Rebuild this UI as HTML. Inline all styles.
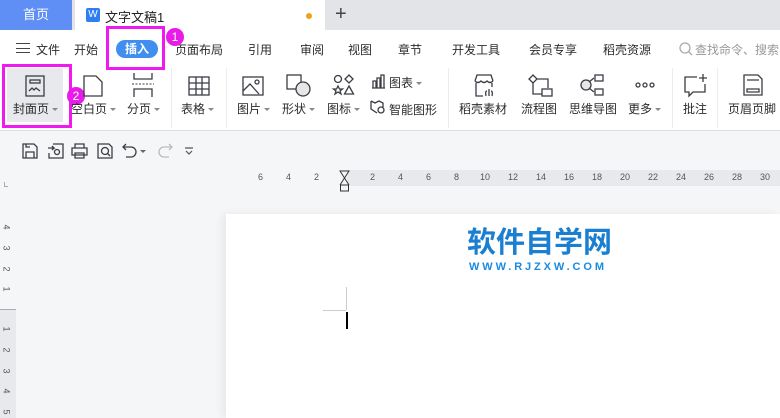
<!DOCTYPE html>
<html><head><meta charset="utf-8"><style>
*{margin:0;padding:0;box-sizing:border-box}
body{width:780px;height:418px;overflow:hidden;position:relative;background:#f5f6f8;font-family:"Liberation Sans","Noto Sans CJK SC",sans-serif;color:#2b2b2b;font-size:12px}
.a{position:absolute;white-space:nowrap}
.lbl{font-size:12px;line-height:14px}
svg{position:absolute;overflow:visible}
.ic{fill:none;stroke:#3a3d44;stroke-width:1.3}
.car{display:inline-block;width:0;height:0;border-left:3px solid transparent;border-right:3px solid transparent;border-top:3px solid #888;vertical-align:middle;margin-left:3px}
.num{font-size:9px;color:#555}
</style></head><body>
<div class="a" style="left:0;top:0;width:780px;height:30px;background:#e3e4e8"></div>
<div class="a" style="left:0;top:0;width:72px;height:30px;background:#5f8ef5;color:#fff;font-size:13px;line-height:30px;text-align:center">首页</div>
<div class="a" style="left:75px;top:0;width:250px;height:30px;background:#fff"></div>
<div class="a" style="left:86px;top:8px;width:14px;height:14px;background:#2f7ef0;border-radius:2px;color:#fff;font-size:10px;line-height:14px;text-align:center">W</div>
<div class="a" style="left:105px;top:7px;font-size:13px;color:#222">文字文稿1</div>
<div class="a" style="left:306px;top:13px;width:6px;height:6px;border-radius:50%;background:#f0a020"></div>
<div class="a" style="left:335px;top:3px;font-size:20px;color:#444;line-height:22px">+</div>
<div class="a" style="left:0;top:30px;width:780px;height:101px;background:#fff;border-bottom:1px solid #dcdde0"></div>
<div class="a" style="left:16px;top:43px;width:14px;height:10px;border-top:1.3px solid #444;border-bottom:1.3px solid #444"></div>
<div class="a" style="left:16px;top:47.5px;width:14px;height:1.3px;background:#444"></div>
<div class="a" style="left:36px;top:41px;font-size:12px">文件</div>
<div class="a" style="left:74px;top:41px">开始</div>
<div class="a" style="left:116px;top:40px;width:42px;height:18px;border-radius:9px;background:#3f8ef0;color:#fff;font-weight:bold;line-height:18px;text-align:center">插入</div>
<div class="a" style="left:175px;top:41px">页面布局</div>
<div class="a" style="left:248px;top:41px">引用</div>
<div class="a" style="left:300px;top:41px">审阅</div>
<div class="a" style="left:348px;top:41px">视图</div>
<div class="a" style="left:398px;top:41px">章节</div>
<div class="a" style="left:452px;top:41px">开发工具</div>
<div class="a" style="left:529px;top:41px">会员专享</div>
<div class="a" style="left:603px;top:41px">稻壳资源</div>
<svg style="left:679px;top:42px" width="14" height="14"><circle cx="6" cy="6" r="5" fill="none" stroke="#aaa" stroke-width="1.3"/><path d="M9.5 9.5 L13 13" stroke="#aaa" stroke-width="1.3"/></svg>
<div class="a" style="left:695px;top:41px;color:#999">查找命令、搜索</div>
<div class="a" style="left:7px;top:68px;width:56px;height:54px;background:#e8e9ec"></div>
<div class="a" style="left:106px;top:26px;width:59px;height:44px;border:3px solid #f01af0"></div>
<div class="a" style="left:166px;top:28px;width:18px;height:18px;border-radius:50%;background:#e81ce8;color:#fff;font-size:12px;line-height:18px;text-align:center">1</div>
<div class="a" style="left:2px;top:64px;width:70px;height:64px;border:3px solid #f01af0"></div>
<div class="a" style="left:67px;top:87px;width:18px;height:18px;border-radius:50%;background:#e81ce8;color:#fff;font-size:12px;line-height:18px;text-align:center">2</div>
<div class="a" style="left:171px;top:68px;width:1px;height:60px;background:#ececee"></div>
<div class="a" style="left:226px;top:68px;width:1px;height:60px;background:#ececee"></div>
<div class="a" style="left:448px;top:68px;width:1px;height:60px;background:#ececee"></div>
<div class="a" style="left:672px;top:68px;width:1px;height:60px;background:#ececee"></div>
<div class="a" style="left:717px;top:68px;width:1px;height:60px;background:#ececee"></div>
<svg style="left:25px;top:75px" width="20" height="22"><rect class="ic" x="1" y="1" width="18" height="20"/><rect class="ic" x="5" y="5" width="10" height="3"/><path class="ic" d="M4 16 L7 13 L9 15 L11 13 L15 16"/></svg>
<svg style="left:83px;top:75px" width="20" height="22"><path class="ic" d="M1 1 H13 L19 7 V21 H1 Z"/></svg>
<svg style="left:132px;top:73px" width="22" height="24"><path class="ic" d="M2 0 V6 H20 V0 M2 24 V16 H20 V24"/><path d="M0 11 H22" stroke="#3a3d44" stroke-dasharray="2 1.5"/></svg>
<svg style="left:188px;top:76px" width="22" height="20"><rect class="ic" x="1" y="1" width="20" height="18"/><path class="ic" d="M1 7 H21 M1 13 H21 M8 1 V19 M14 1 V19"/></svg>
<svg style="left:242px;top:76px" width="22" height="20"><rect class="ic" x="1" y="1" width="20" height="18"/><path class="ic" d="M1 15 L8 8 L17 18"/><circle class="ic" cx="15" cy="6" r="2"/></svg>
<svg style="left:286px;top:74px" width="26" height="24"><rect class="ic" x="1" y="1" width="14" height="14"/><circle cx="17" cy="15" r="7" fill="#e6e6e6" stroke="#3a3d44" stroke-width="1.3"/></svg>
<svg style="left:333px;top:74px" width="22" height="22"><circle class="ic" cx="5" cy="5" r="3.5"/><path class="ic" d="M16 1 L20 5 L16 9 L12 5 Z"/><path class="ic" d="M5 12 L6.5 15 H9.5 L7 17 L8 20 L5 18 L2 20 L3 17 L0.5 15 H3.5 Z"/><path class="ic" d="M16 12 L20.5 20 H11.5 Z"/></svg>
<svg style="left:372px;top:75px" width="14" height="14"><path class="ic" d="M1 13 V6 H4 V13 M5 13 V3 H8 V13 M9 13 V0 H12 V13 M0 13 H13"/></svg>
<div class="a" style="left:389px;top:74px">图表<span class="car"></span></div>
<svg style="left:370px;top:99px" width="16" height="16"><path class="ic" d="M1 2 L5 4 L9 2 L13 4 V8 M1 2 V10 L7 14"/><circle class="ic" cx="11" cy="11" r="3"/></svg>
<div class="a" style="left:389px;top:101px">智能图形</div>
<svg style="left:472px;top:74px" width="24" height="24"><path class="ic" d="M3 7 L5 1 H19 L21 7 M3 7 Q6 10 9 7 Q12 10 15 7 Q18 10 21 7 M4 9 V22 H11 M20 9 V13"/><path class="ic" d="M17 22 V15 M14 22 Q13 17 15 17 M20 22 Q21 17 19 17"/></svg>
<svg style="left:528px;top:74px" width="26" height="24"><path class="ic" d="M5 1 L9 5 L5 9 L1 5 Z M9 5 H20 V14 M5 9 V20 H14"/><rect class="ic" x="14" y="15" width="10" height="7"/></svg>
<svg style="left:580px;top:74px" width="26" height="24"><circle cx="6" cy="11" r="5" fill="#e6e6e6" stroke="#3a3d44" stroke-width="1.3"/><path class="ic" d="M9 8 L14 4 M9 14 L14 18"/><rect class="ic" x="15" y="1" width="8" height="6"/><rect class="ic" x="15" y="15" width="8" height="6"/></svg>
<svg style="left:635px;top:82px" width="20" height="6"><circle class="ic" cx="3" cy="3" r="2"/><circle class="ic" cx="10" cy="3" r="2"/><circle class="ic" cx="17" cy="3" r="2"/></svg>
<svg style="left:684px;top:74px" width="24" height="24"><path class="ic" d="M13 3 H1 V18 H5 V22 L9 18 H21 V10 M19 0 V8 M15 4 H23"/></svg>
<svg style="left:743px;top:74px" width="20" height="22"><path class="ic" d="M1 1 H15 L19 5 V21 H1 Z"/><path class="ic" d="M4 6 H16 M4 15 H16 V18 H4 Z"/></svg>
<div class="a lbl" style="left:13px;top:102px">封面页<span class="car"></span></div>
<div class="a lbl" style="left:71px;top:102px">空白页<span class="car"></span></div>
<div class="a lbl" style="left:127px;top:102px">分页<span class="car"></span></div>
<div class="a lbl" style="left:181px;top:102px">表格<span class="car"></span></div>
<div class="a lbl" style="left:237px;top:102px">图片<span class="car"></span></div>
<div class="a lbl" style="left:282px;top:102px">形状<span class="car"></span></div>
<div class="a lbl" style="left:327px;top:102px">图标<span class="car"></span></div>
<div class="a lbl" style="left:459px;top:102px">稻壳素材</div>
<div class="a lbl" style="left:521px;top:102px">流程图</div>
<div class="a lbl" style="left:569px;top:102px">思维导图</div>
<div class="a lbl" style="left:628px;top:102px">更多<span class="car"></span></div>
<div class="a lbl" style="left:683px;top:102px">批注</div>
<div class="a lbl" style="left:728px;top:102px">页眉页脚</div>
<svg style="left:22px;top:143px" width="16" height="16"><path class="ic" d="M1 1 H12 L15 4 V15 H1 Z M4 15 V9 H12 V15 M4 1 V4 H8"/></svg>
<svg style="left:48px;top:143px" width="16" height="16"><path class="ic" d="M5 1 H15 V15 H1 V10 M0 5 H6 L4 3 M6 5 L4 7"/><circle class="ic" cx="9" cy="9" r="2.5"/></svg>
<svg style="left:71px;top:143px" width="17" height="16"><path class="ic" d="M4 5 V1 H13 V5 M1 5 H16 V12 H1 Z M4 10 H13 V15 H4 Z"/></svg>
<svg style="left:97px;top:143px" width="16" height="16"><path class="ic" d="M1 1 H12 L15 4 V15 H1 Z"/><circle class="ic" cx="8" cy="8" r="3.5"/><path class="ic" d="M10.5 10.5 L13 13"/></svg>
<svg style="left:122px;top:143px" width="16" height="16"><path class="ic" d="M4 1 L1 4 L4 7 M1 4 H9 A5 5 0 0 1 9 14 H4"/></svg>
<div class="a" style="left:140px;top:150px;border-left:3px solid transparent;border-right:3px solid transparent;border-top:3px solid #666"></div>
<svg style="left:157px;top:143px" width="16" height="16"><path d="M12 1 L15 4 L12 7 M15 4 H7 A5 5 0 0 0 7 14 H12" fill="none" stroke="#bbb" stroke-width="1.3"/></svg>
<svg style="left:184px;top:147px" width="10" height="9"><path d="M1 1 H9 M2 4 L5 7 L8 4" fill="none" stroke="#555" stroke-width="1.2"/></svg>
<div class="a" style="left:4px;top:182px;width:4px;height:5px;border-left:1.5px solid #aaa;border-bottom:1.5px solid #aaa"></div>
<div class="a" style="left:347px;top:170px;width:433px;height:16px;background:#e7e9ed"></div>
<div class="a num" style="left:258px;top:172px">6</div>
<div class="a num" style="left:286px;top:172px">4</div>
<div class="a num" style="left:314px;top:172px">2</div>
<svg style="left:339px;top:170px" width="12" height="22"><path d="M1 1 H10 L5.5 8 Z M1 15 L5.5 8 L10 15" fill="none" stroke="#333" stroke-width="1"/><rect x="1.5" y="15" width="8" height="6" fill="none" stroke="#333"/></svg>
<div class="a num" style="left:370px;top:172px">2</div>
<div class="a num" style="left:398px;top:172px">4</div>
<div class="a num" style="left:426px;top:172px">6</div>
<div class="a num" style="left:454px;top:172px">8</div>
<div class="a num" style="left:480px;top:172px">10</div>
<div class="a num" style="left:508px;top:172px">12</div>
<div class="a num" style="left:536px;top:172px">14</div>
<div class="a num" style="left:564px;top:172px">16</div>
<div class="a num" style="left:592px;top:172px">18</div>
<div class="a num" style="left:620px;top:172px">20</div>
<div class="a num" style="left:648px;top:172px">22</div>
<div class="a num" style="left:676px;top:172px">24</div>
<div class="a num" style="left:704px;top:172px">26</div>
<div class="a num" style="left:732px;top:172px">28</div>
<div class="a num" style="left:760px;top:172px">30</div>
<div class="a" style="left:0;top:309px;width:16px;height:109px;background:#e7e9ed;border-top:1px solid #aab"></div>
<div class="a num" style="left:4px;top:222px;transform:rotate(90deg)">4</div>
<div class="a num" style="left:4px;top:243px;transform:rotate(90deg)">3</div>
<div class="a num" style="left:4px;top:264px;transform:rotate(90deg)">2</div>
<div class="a num" style="left:4px;top:284px;transform:rotate(90deg)">1</div>
<div class="a num" style="left:4px;top:324px;transform:rotate(90deg)">1</div>
<div class="a num" style="left:4px;top:345px;transform:rotate(90deg)">2</div>
<div class="a num" style="left:4px;top:366px;transform:rotate(90deg)">3</div>
<div class="a num" style="left:4px;top:386px;transform:rotate(90deg)">4</div>
<div class="a num" style="left:4px;top:407px;transform:rotate(90deg)">5</div>
<div class="a" style="left:226px;top:214px;width:554px;height:204px;background:#fff;box-shadow:-4px 0 8px rgba(0,0,0,0.06)"></div>
<div class="a" style="left:467px;top:226px;font-size:29px;font-weight:bold;color:#1a7fd0;line-height:34px;letter-spacing:0px">软件自学网</div>
<div class="a" style="left:469px;top:261px;font-size:11px;font-weight:bold;color:#1a8ae0;letter-spacing:2.9px">WWW.RJZXW.COM</div>
<div class="a" style="left:346px;top:287px;width:1px;height:23px;background:#ccc"></div>
<div class="a" style="left:323px;top:310px;width:23px;height:1px;background:#ccc"></div>
<div class="a" style="left:346px;top:312px;width:2px;height:17px;background:#000"></div>
</body></html>
